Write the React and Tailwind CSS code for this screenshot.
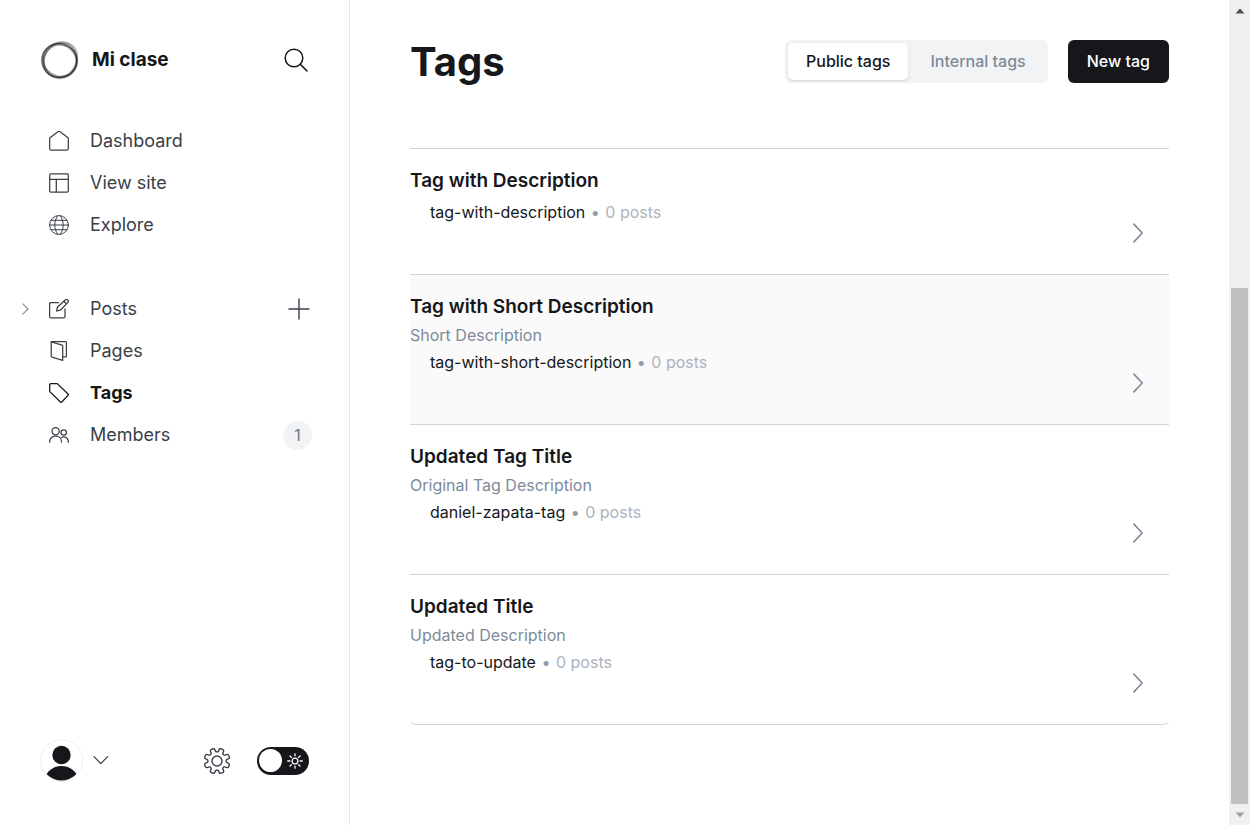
import React from "react";

const line = {
  fill: "none",
  stroke: "currentColor",
  strokeWidth: 1.25,
  strokeLinecap: "round",
  strokeLinejoin: "round",
};

function Icon({ children, className = "size-5", viewBox = "0 0 20 20", ...rest }) {
  return (
    <svg viewBox={viewBox} className={`shrink-0 ${className}`} aria-hidden="true" {...line} {...rest}>
      {children}
    </svg>
  );
}

function HomeIcon() {
  return (
    <Icon>
      <path d="M.7 7V17.800a1.2 1.2 0 0 0 1.2 1.2h16.2a1.2 1.2 0 0 0 1.2-1.2V7L10.800.5a1.300 1.300 0 0 0-1.600 0z" />
    </Icon>
  );
}

function LayoutIcon() {
  return (
    <Icon>
      <rect x=".7" y=".9" width="18.6" height="18.2" rx="1" />
      <path d="M.7 6.3h18.6M7.3 6.3v12.8" />
    </Icon>
  );
}

function GlobeIcon() {
  return (
    <Icon strokeWidth="1">
      <circle cx="10" cy="10" r="9.4" />
      <path d="M.6 10h18.8M1.9 5.3h16.2M1.9 14.7h16.2M8.6.8C4.8 6.4 4.8 13.6 8.6 19.2M11.4.8c3.8 5.6 3.8 12.8 0 18.4" />
    </Icon>
  );
}

function EditIcon() {
  return (
    <Icon>
      <path d="M9.6 3.500H1.8A1.2 1.2 0 0 0 .6 4.700v13a1.2 1.2 0 0 0 1.2 1.2h13a1.2 1.2 0 0 0 1.2-1.2v-7.8" />
      <path d="M11.3 11.2l-3.7.8.8-3.7 7.7-7.300a1.7 1.7 0 0 1 2.6 2.600zM14.900 2.200l2.600 2.600" />
    </Icon>
  );
}

function PagesIcon() {
  return (
    <Icon>
      <path d="M2.2.8 13 4.1a1 1 0 0 1 .7 1v14.2L2.9 16.1a1 1 0 0 1-.7-1z" />
      <path d="M2.2.7h14.2a1 1 0 0 1 1 1v13.2a1 1 0 0 1-1 1h-2.6" />
    </Icon>
  );
}

function TagIcon() {
  return (
    <Icon strokeWidth="1.3">
      <path d="M.7 1.7a1 1 0 0 1 1-1h6.1a1.5 1.5 0 0 1 1 .4l10.2 9.9a1 1 0 0 1 0 1.4L12.8 19a1 1 0 0 1-1.4 0L1.1 8.9a1.5 1.5 0 0 1-.4-1z" />
    </Icon>
  );
}

function MembersIcon() {
  return (
    <Icon>
      <circle cx="6.6" cy="6.2" r="3.6" />
      <path d="M.6 17.2c0-3.7 2.5-6 6-6s6 2.3 6 6" />
      <circle cx="14.7" cy="7.5" r="2.7" />
      <path d="M12.7 12.3c3.6-1.5 6.7.8 6.7 4.9" />
    </Icon>
  );
}

function ChevronIcon({ className }) {
  return (
    <Icon viewBox="0 0 10 20" className={className} strokeWidth="1.6">
      <path d="M.9 1.1 9.2 10 .9 18.9" />
    </Icon>
  );
}

function gearPath() {
  const center = 13;
  const points = [];
  for (let tooth = 0; tooth < 8; tooth += 1) {
    const base = tooth * 45 + 22.5;
    [
      [-22.5, 9],
      [-13, 9.6],
      [-11, 13.2],
      [11, 13.2],
      [13, 9.6],
    ].forEach(([offset, radius]) => {
      const angle = ((base + offset) * Math.PI) / 180;
      points.push([center + radius * Math.sin(angle), center - radius * Math.cos(angle)]);
    });
  }
  const mid = (a, b) => [(a[0] + b[0]) / 2, (a[1] + b[1]) / 2];
  const start = mid(points[points.length - 1], points[0]);
  let d = `M${start[0].toFixed(2)} ${start[1].toFixed(2)}`;
  points.forEach((point, i) => {
    const end = mid(point, points[(i + 1) % points.length]);
    d += `Q${point[0].toFixed(2)} ${point[1].toFixed(2)} ${end[0].toFixed(2)} ${end[1].toFixed(2)}`;
  });
  return `${d}Z`;
}

function GearIcon() {
  return (
    <Icon viewBox="0 0 26 26" className="size-[26px]" strokeWidth="1.4">
      <path d={gearPath()} />
      <circle cx="13" cy="13" r="5" />
    </Icon>
  );
}

function Logo() {
  return (
    <svg viewBox="0 0 40 40" className="size-10 shrink-0" fill="none" stroke="#15171a" aria-hidden="true">
      <ellipse cx="19.2" cy="20.6" rx="17.4" ry="17" strokeWidth="1.3" opacity=".6" />
      <ellipse cx="20.4" cy="19.8" rx="18.4" ry="15.8" strokeWidth="2" opacity=".3" transform="rotate(-52 20.4 19.8)" />
      <ellipse cx="20.2" cy="20.4" rx="17.8" ry="16.6" strokeWidth="2.2" opacity=".3" transform="rotate(-80 20.2 20.4)" />
      <ellipse cx="19.6" cy="20.4" rx="17.6" ry="15.6" strokeWidth="2" opacity=".3" transform="rotate(35 19.6 20.4)" />
      <ellipse cx="20.4" cy="21" rx="16.8" ry="16" strokeWidth="1.6" opacity=".3" />
    </svg>
  );
}

function NavLink({ icon, label, active, children }) {
  return (
    <li className="flex h-[42px] items-center">
      <a
        href="#"
        aria-current={active ? "page" : undefined}
        className={`flex flex-1 items-center gap-[21px] text-lg ${active ? "font-bold text-[#15171a]" : "text-[#394047]"}`}
      >
        {icon}
        {label}
      </a>
      {children}
    </li>
  );
}

function Sidebar() {
  return (
    <aside className="flex w-[350px] shrink-0 flex-col border-r border-[#e6e9eb] pt-10 pb-[43px]">
      <div className="flex items-center pr-[41px] pl-10">
        <Logo />
        <span className="ml-3 flex-1 text-[19px] font-bold">Mi clase</span>
        <button type="button" aria-label="Search">
          <Icon viewBox="0 0 24 24" className="size-6" strokeWidth="1.5">
            <circle cx="10" cy="10" r="8.8" />
            <path d="m16.3 16.3 6.6 6.6" />
          </Icon>
        </button>
      </div>
      <nav className="mt-10 flex flex-col gap-[42px]">
        <ul className="pr-10 pl-[49px]">
          <NavLink icon={<HomeIcon />} label="Dashboard" />
          <NavLink icon={<LayoutIcon />} label="View site" />
          <NavLink icon={<GlobeIcon />} label="Explore" />
        </ul>
        <div className="flex items-start">
          <button type="button" aria-label="Expand posts" className="flex h-[42px] w-[49px] shrink-0 items-center pl-[22px] text-[#7c8b9a]">
            <Icon viewBox="0 0 7 12" className="h-3 w-[7px]" strokeWidth="1.1">
              <path d="M.8 .9 6.1 6 .8 11.100" />
            </Icon>
          </button>
          <ul className="flex-1">
            <NavLink icon={<EditIcon />} label="Posts">
              <button type="button" aria-label="New post" className="mr-[39px] text-[#394047]">
                <Icon viewBox="0 0 22 22" className="size-[22px]" strokeWidth="1.4">
                  <path d="M11 1v20M1 11h20" />
                </Icon>
              </button>
            </NavLink>
            <NavLink icon={<PagesIcon />} label="Pages" />
            <NavLink icon={<TagIcon />} label="Tags" active />
            <NavLink icon={<MembersIcon />} label="Members">
              <span className="mr-[37px] flex size-[29px] items-center justify-center rounded-full bg-[#f1f3f4] text-base text-[#6b7a89]">
                1
              </span>
            </NavLink>
          </ul>
        </div>
      </nav>
      <div className="mt-auto flex items-center pr-10 pl-10">
        <button type="button" aria-label="Account" className="flex items-center gap-[10px] text-[#394047]">
          <svg viewBox="0 0 43 43" className="size-[43px]" aria-hidden="true">
            <defs>
              <clipPath id="avatar">
                <circle cx="21.5" cy="21.5" r="20" />
              </clipPath>
            </defs>
            <circle cx="21.5" cy="21.5" r="21" fill="#fff" stroke="#eceef0" />
            <circle cx="21.5" cy="16" r="9.2" fill="#15171a" />
            <circle cx="21.5" cy="45" r="18" fill="#15171a" clipPath="url(#avatar)" />
          </svg>
          <Icon viewBox="0 0 16 10" className="h-[10px] w-4">
            <path d="m1 .6 6.8 7 6.8-7" />
          </Icon>
        </button>
        <a href="#" aria-label="Settings" className="mr-[27px] ml-auto text-[#394047]">
          <GearIcon />
        </a>
        <button type="button" role="switch" aria-checked="false" aria-label="Dark mode" className="flex h-7 w-[52px] items-center justify-between rounded-full bg-[#15171a] pr-[6px] pl-[2px] text-white">
          <span className="size-[23px] rounded-full bg-white" />
          <Icon viewBox="0 0 16 16" className="size-4" strokeWidth="1.3">
            <circle cx="8" cy="8" r="2.9" />
            <path d="M8 .8v2M8 13.2v2M.8 8h2M13.2 8h2M2.9 2.9l1.4 1.4M11.7 11.7l1.4 1.4M2.9 13.1l1.4-1.4M11.7 4.3l1.4-1.4" />
          </Icon>
        </button>
      </div>
    </aside>
  );
}

const tags = [
  { name: "Tag with Description", slug: "tag-with-description" },
  { name: "Tag with Short Description", description: "Short Description", slug: "tag-with-short-description", hovered: true },
  { name: "Updated Tag Title", description: "Original Tag Description", slug: "daniel-zapata-tag" },
  { name: "Updated Title", description: "Updated Description", slug: "tag-to-update" },
];

function TagRow({ tag }) {
  return (
    <li className={`border-t border-[#ced4de] ${tag.hovered ? "bg-[#fafafa]" : ""}`}>
      <a href="#" className="flex items-end justify-between">
        <div className="flex flex-col gap-[3px] pt-[18px] pb-[50px]">
          <h3 className="text-[19px] leading-[27px] font-semibold">{tag.name}</h3>
          <p className="text-base leading-6 text-[#7c8b9a] empty:hidden">{tag.description}</p>
          <p className={`pl-5 text-base leading-6 ${tag.description ? "" : "pt-[3px]"}`}>
            {tag.slug} <span className="px-px text-[#8e9cac]">•</span> <span className="text-[#abb4be]">0 posts</span>
          </p>
        </div>
        <ChevronIcon className="mr-[26px] mb-[31px] h-5 w-[10px] text-[#7c8b9a]" />
      </a>
    </li>
  );
}

function ScrollRail() {
  return (
    <div className="sticky top-0 flex h-screen w-[21px] shrink-0 flex-col items-center bg-[#f0f0f0]" aria-hidden="true">
      <div className="flex h-[21px] items-center">
        <svg viewBox="0 0 10 6" className="h-[6px] w-[10px]" fill="#505050">
          <path d="M5 .5 9.5 5.5h-9z" />
        </svg>
      </div>
      <div className="grow-[267]" />
      <div className="w-[17px] grow-[516] bg-[#c1c1c1]" />
      <div className="flex h-[21px] items-center">
        <svg viewBox="0 0 10 6" className="h-[6px] w-[10px]" fill="#a0a0a0">
          <path d="M5 5.5.5.5h9z" />
        </svg>
      </div>
    </div>
  );
}

export default function App() {
  return (
    <div className="flex min-h-screen bg-white font-['Inter',sans-serif] text-[#15171a]">
      <Sidebar />
      <main className="min-w-0 flex-1 px-[60px] pt-10 pb-[100px]">
        <header className="flex flex-wrap items-center gap-5">
          <h1 className="mr-auto text-[40px] leading-[43px] font-bold">Tags</h1>
          <div className="flex rounded-md bg-[#f1f3f4] p-[3px] text-base font-medium">
            <button type="button" className="h-[37px] rounded-[5px] bg-white px-[18px] pb-px shadow-sm">
              Public tags
            </button>
            <button type="button" className="h-[37px] pr-[19px] pb-px pl-[22px] text-[#7c8b9a]">
              Internal tags
            </button>
          </div>
          <button type="button" className="h-[43px] rounded-md bg-[#15171a] px-[19px] pb-px text-base font-medium text-white">
            New tag
          </button>
        </header>
        <ul className="mt-[65px] overflow-hidden rounded-b-md border-b border-[#ced4de]">
          {tags.map((tag) => (
            <TagRow key={tag.slug} tag={tag} />
          ))}
        </ul>
      </main>
      <ScrollRail />
    </div>
  );
}
